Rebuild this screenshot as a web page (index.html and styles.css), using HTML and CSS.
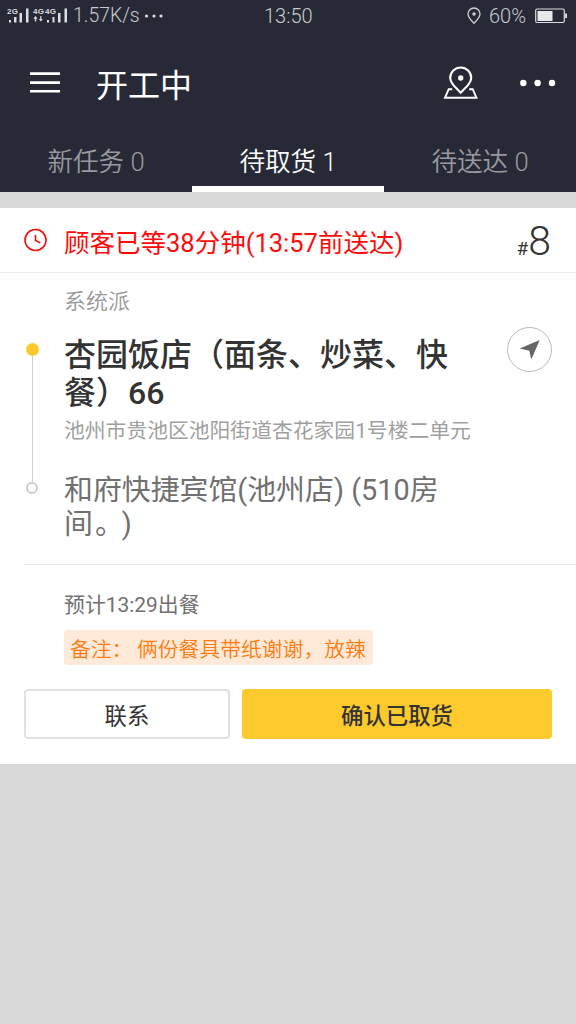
FILE: index.html
```html
<!DOCTYPE html>
<html lang="zh-CN">
<head>
<meta charset="utf-8">
<title>开工中</title>
<link rel="stylesheet" href="styles.css">
</head>
<body>
<header class="top">
  <div class="status">
    <div class="status-left">
      <svg class="signals" width="62" height="18" viewBox="0 0 62 18" fill="#dcdde0">
        <text class="net" x="0" y="7" textLength="11">2G</text>
        <text class="net" x="26" y="7" textLength="11">4G</text>
        <text class="net" x="38" y="7" textLength="11">4G</text>
        <path d="M2 13h2v2.500h-2zM7 10h2.500v5.500h-2.500zM12.500 6h2.500v9.500h-2.500zM19 1.500h2.500v14h-2.500zM40 13h2v2.500h-2zM45.500 10h2v5.500h-2zM51 6h2.500v9.500h-2.500zM57.500 1.500h2.500v14h-2.500z"/>
        <path d="M28.500 9l-2.200 2.700h1.500v2.800h1.400v-2.800h1.500zM33.800 14.500l-2-2.500h1.400v-3h1.200v3h1.400z"/>
      </svg>
      <span class="speed">1.57K/s</span>
      <svg width="20" height="6" viewBox="0 0 20 6" fill="#dcdde0"><circle cx="2.500" cy="3" r="1.600"/><circle cx="10" cy="3" r="1.600"/><circle cx="17" cy="3" r="1.600"/></svg>
    </div>
    <span class="clock">13:50</span>
    <div class="status-right">
      <svg width="16" height="18" viewBox="0 0 16 18" fill="none" stroke="#cfd0d4" stroke-width="1.300"><path d="M8 16.300C4.500 12.800 2 10.200 2 7a6 6 0 0 1 12 0c0 3.200-2.500 5.800-6 9.300z"/><circle cx="8" cy="7" r="1.700" fill="#cfd0d4" stroke="none"/></svg>
      <span class="percent">60%</span>
      <svg width="32" height="16" viewBox="0 0 32 16"><rect x=".7" y="1" width="28.600" height="13.500" rx="1.500" fill="none" stroke="#dcdde0" stroke-width="1.200"/><path d="M2.500 3h15v10h-15zM30.200 5.500h1.800v4.500h-1.800z" fill="#e8e8e8"/></svg>
    </div>
  </div>
  <div class="bar">
    <svg class="menu" width="32" height="24" viewBox="0 0 32 24" fill="#fff"><path d="M1 1.200h30v2.700h-30zM1 10.200h30v2.700h-30zM1 18.900h30v2.700h-30z"/></svg>
    <h1 class="title">开工中</h1>
    <svg class="map" width="36" height="34" viewBox="0 0 36 34" fill="none" stroke="#fff" stroke-width="2.100"><path d="M17.700 26.700C10.800 20 7.200 16.300 7.200 12a10.500 10.500 0 0 1 21 0c0 4.300-3.600 8-10.500 14.700z"/><circle cx="17.700" cy="12" r="2.700" fill="#fff" stroke="none"/><path d="M9.200 23.200h-3.500L2 31.800h31.500l-3.800-8.600h-3.500" stroke-width="1.900"/></svg>
    <svg class="more" width="38" height="8" viewBox="0 0 38 8" fill="#fff"><circle cx="4.300" cy="4" r="3.200"/><circle cx="18.600" cy="4" r="3.200"/><circle cx="33" cy="4" r="3.200"/></svg>
  </div>
  <nav class="tabs">
    <a class="tab">新任务 0</a>
    <a class="tab active">待取货 1</a>
    <a class="tab">待送达 0</a>
  </nav>
</header>
<main class="card">
  <section class="alert">
    <svg width="24" height="24" viewBox="0 0 24 24" fill="none" stroke="#f70b0b" stroke-width="1.600"><circle cx="11.500" cy="12" r="10.500"/><path d="M11.500 7v5.400l4.700 2.300"/></svg>
    <span class="alert-text">顾客已等38分钟(13:57前送达)</span>
    <span class="serial"><span class="hash">#</span>8</span>
  </section>
  <section class="route">
    <div class="rail"><i class="from"></i><i class="line"></i><i class="to"></i></div>
    <div class="stops">
      <p class="source">系统派</p>
      <h2 class="store">杏园饭店（面条、炒菜、快<br>餐）66</h2>
      <p class="address">池州市贵池区池阳街道杏花家园1号楼二单元</p>
      <p class="customer">和府快捷宾馆(池州店) (510房<br>间<span class="stop">。</span>)</p>
    </div>
    <button class="go"><svg width="22" height="22" viewBox="0 0 22 22" fill="#666"><path d="M20.700 1L12.300 20.500 10.300 11.800.700 9.500z"/></svg></button>
  </section>
  <section class="extra">
    <p class="eta">预计13:29出餐</p>
    <p class="note">备注： 俩份餐具带纸谢谢，放辣</p>
  </section>
  <section class="actions">
    <button class="btn contact">联系</button>
    <button class="btn confirm">确认已取货</button>
  </section>
</main>
</body>
</html>
```
FILE: styles.css
```css
* { box-sizing: border-box; margin: 0; padding: 0; }
body {
  width: 576px; min-height: 1024px; background: #d9d9d9; color: #333;
  font-family: Roboto, "Noto Sans CJK SC", sans-serif; font-weight: 350;
  text-spacing-trim: space-all;
}
svg { display: block; flex: none; }
button { font: inherit; color: inherit; }
span, p, h1, h2, a { white-space: nowrap; }
.title, .source, .note, .btn { font-family: "Noto Sans CJK SC", sans-serif; }

.top { height: 192px; background: #272a36; color: #fff; }
.status { height: 30px; display: grid; grid-template-columns: 264px 49px 1fr; align-items: center; color: #c9cacd; font-size: 20px; line-height: 30px; }
.status-left { display: flex; align-items: center; padding-left: 7px; }
.net { font: bold 8px "Liberation Sans", sans-serif; }
.speed { width: 66px; margin-left: 4px; padding-top: 1px; font-size: 19.400px; }
.status-left svg:last-child { margin-left: 5px; }
.status-right { display: flex; align-items: center; justify-content: flex-end; padding-right: 9px; }
.percent { margin: 0 9px 0 7px; }

.bar { height: 106px; display: flex; align-items: center; padding: 0 19px 0 29px; }
.title { margin-left: 35px; font-size: 32px; font-weight: 400; line-height: 48px; }
.map { margin-left: auto; }
.more { margin-left: 40px; }

.tabs { height: 56px; display: grid; grid-template-columns: repeat(3, 1fr); }
.tab { padding-top: 3px; border-bottom: 6px solid transparent; text-align: center; font-size: 25.600px; line-height: 46px; color: #989a9f; }
.active { color: #fff; border-color: #fff; }

.card { height: 556px; margin-top: 16px; background: #fff; }
.alert { height: 65px; border-bottom: 1px solid #ebebeb; display: flex; align-items: center; padding: 0 25px 0 24px; }
.alert-text { margin-left: 16px; font-size: 25.500px; font-weight: 400; color: #ff0b0b; }
.serial { margin-left: auto; padding-top: 10px; font-size: 41px; line-height: 56px; }
.hash { font-size: 19px; font-weight: 400; }

.route { height: 292px; margin-left: 24px; border-bottom: 1px solid #ebebeb; display: grid; grid-template-columns: 40px 1fr 69px; }
.rail { display: flex; flex-direction: column; align-items: center; width: 16px; padding-top: 70px; }
.from { width: 13px; height: 13px; border-radius: 50%; background: #fdca2e; }
.line { width: 1px; height: 126px; background: #d0d0d0; }
.to { width: 12px; height: 12px; border: 2px solid #ccc; border-radius: 50%; }
.stops { padding-top: 10px; }
.source { font-size: 22px; line-height: 32px; color: #999; }
.store { margin-top: 21px; font-size: 32px; line-height: 38px; font-weight: 500; }
.address { margin-top: 4px; font-size: 20.800px; line-height: 30px; font-weight: 400; color: #9f9f9f; }
.customer { margin-top: 27px; font-size: 28.900px; line-height: 34px; font-weight: 400; color: #707070; }
.stop { margin: 0 -2px 0 2px; }
.go { width: 45px; height: 45px; margin-top: 54px; border: 1px solid #bbb; border-radius: 50%; background: #fff; display: grid; place-items: center; }

.extra { height: 124px; padding: 25px 0 0 64px; }
.eta { font-size: 20.900px; line-height: 30px; font-weight: 400; color: #707070; }
.note { width: 309px; height: 35px; margin-top: 10px; padding: 1px 0 0 6px; border-radius: 4px; background: #ffe9d9; color: #ff7b0d; font-size: 20.800px; line-height: 35px; }

.actions { display: grid; grid-template-columns: 206px 310px; column-gap: 12px; padding: 0 24px; }
.btn { height: 50px; border: 0; border-radius: 4px; font-size: 22.400px; line-height: 50px; }
.contact { border: 2px solid #e0e0e0; background: #fff; line-height: 46px; font-weight: 400; }
.confirm { background: #fdca2e; font-weight: 500; }
```
